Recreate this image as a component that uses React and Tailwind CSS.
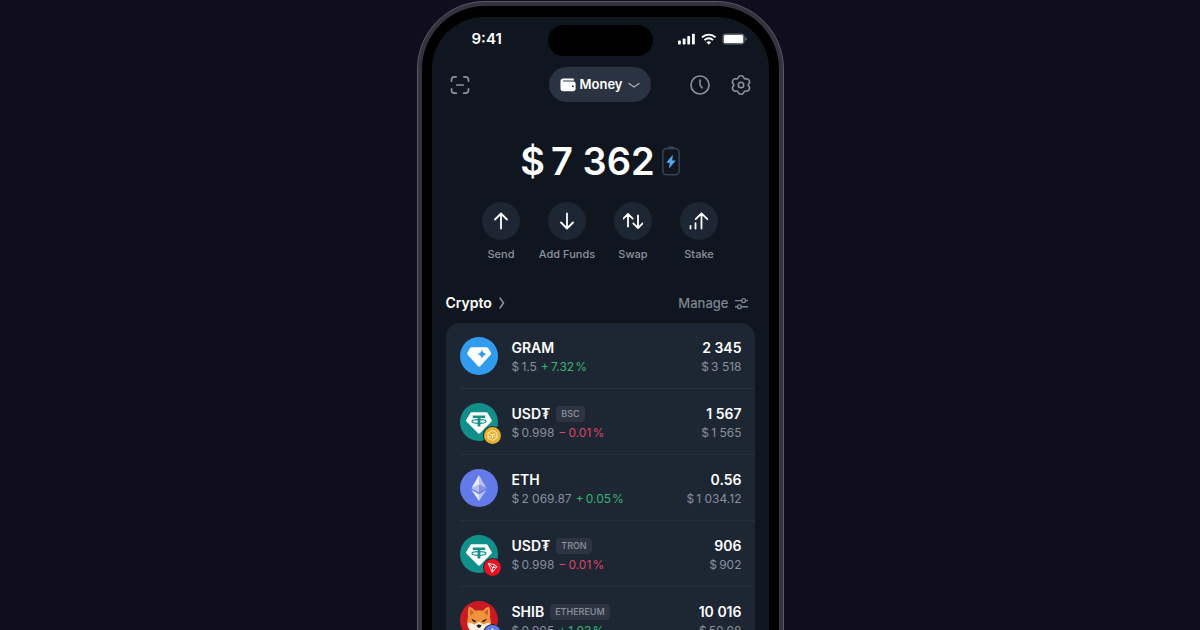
import clsx from "clsx";

/* ---------------- DATA ---------------- */
const ACTIONS = [
  { label: "Send", icon: "send" },
  { label: "Add Funds", icon: "add" },
  { label: "Swap", icon: "swap" },
  { label: "Stake", icon: "stake" },
];

const TOKENS = [
  { id: "gram", icon: "gram", name: "GRAM", price: "$ 1.5", change: "+ 7.32 %", up: true, amount: "2 345", value: "$ 3 518" },
  { id: "usdt-bsc", icon: "usdt", badge: "bsc", name: "USD₮", network: "BSC", price: "$ 0.998", change: "− 0.01 %", up: false, amount: "1 567", value: "$ 1 565" },
  { id: "eth", icon: "eth", name: "ETH", price: "$ 2 069.87", change: "+ 0.05 %", up: true, amount: "0.56", value: "$ 1 034.12" },
  { id: "usdt-tron", icon: "usdt", badge: "tron", name: "USD₮", network: "TRON", price: "$ 0.998", change: "− 0.01 %", up: false, amount: "906", value: "$ 902" },
  { id: "shib", icon: "shib", badge: "eth", name: "SHIB", network: "ETHEREUM", price: "$ 0.005", change: "+ 1.03 %", up: true, amount: "10 016", value: "$ 50.08" },
];

// currency signs and percents are set off with a thin space
const thin = (s) => s.replace(/([$+−]) /g, "$1\u2009").replace(/ %/g, "\u200A%");

/* ---------------- ICONS ---------------- */
const Stroke = ({ className, children, width = 1.5, box = 20 }) => (
  <svg
    viewBox={`0 0 ${box} ${box}`}
    className={className}
    fill="none"
    stroke="currentColor"
    strokeWidth={width}
    strokeLinecap="round"
    strokeLinejoin="round"
    aria-hidden="true"
  >
    {children}
  </svg>
);

const ScanIcon = () => (
  <Stroke className="size-5" width={1.7}>
    <path d="M1.5 6.2V5a3.2 3.2 0 0 1 3.2-3.2h1.5M13.8 1.8h1.5A3.2 3.2 0 0 1 18.5 5v1.2M18.5 13.8V15a3.2 3.2 0 0 1-3.2 3.2h-1.5M6.2 18.2H4.7A3.2 3.2 0 0 1 1.5 15v-1.2M6.8 10h6.4" />
  </Stroke>
);

const ClockIcon = () => (
  <Stroke className="size-5" width={1.6}>
    <circle cx="10" cy="10" r="9" />
    <path d="M10 5v4.6c0 .5.2.8.5 1.2l1.6 2" />
  </Stroke>
);

const GearIcon = () => (
  <Stroke className="size-5" width={1.6}>
    <path d="M10 .8Q12.16.8 12.73 2.47 13.2 4.3 15.16 3.87 17.02 3.45 18.1 5.32 19.18 7.19 17.89 8.6 16.6 10 17.89 11.4 19.18 12.81 18.1 14.68 17.02 16.55 15.16 16.13 13.2 15.7 12.73 17.53 12.16 19.2 10 19.2 7.84 19.2 7.27 17.53 6.8 15.7 4.84 16.13 2.98 16.55 1.9 14.68.82 12.81 2.11 11.4 3.4 10 2.11 8.6.82 7.19 1.9 5.32 2.98 3.45 4.84 3.87 6.8 4.3 7.27 2.47 7.84.8 10 .8Z" />
    <circle cx="10" cy="10" r="2.7" />
  </Stroke>
);

const WalletIcon = () => (
  <svg viewBox="0 0 16 14" className="h-3.5 w-4" aria-hidden="true">
    <path fill="#fff" d="M3.2.6h9.300c1 0 1.600.6 1.700 1.500l-.1.5H3a.5.5 0 0 0 0 .9h10.200c1.600 0 2.400.9 2.400 2.300v5c0 1.600-.9 2.500-2.500 2.500H3.200C1.500 13.300.5 12.300.5 10.600V3.300C.5 1.600 1.500.6 3.2.6Z" />
    <circle cx="12.8" cy="8.2" r="1" fill="#2a3342" />
  </svg>
);

const ACTION_PATHS = {
  send: "M10 17.5V2.5M4 8.5l6-6 6 6",
  add: "M10 2.5v15M4 11.5l6 6 6-6",
  swap: "M5 15.5V3M.3 7.7 5 3l4.700 4.700M15 4.500V17M10.300 12.300 15 17l4.700-4.700",
  stake: "M1.5 17.5v-2.6M6.5 17.5v-5.3M12.5 17.5v-15M6.7 8.1l5.8-5.8 5.8 5.8",
};

const ActionIcon = ({ name }) => (
  <Stroke className="size-5" width={1.8}>
    <path d={ACTION_PATHS[name]} />
  </Stroke>
);

const StatusIcons = () => (
  <svg viewBox="0 0 70 14" className="h-3.5 w-[70px]" fill="#fff" aria-hidden="true">
    <rect x="1" y="8.5" width="2.8" height="4" rx=".8" />
    <rect x="5.7" y="6.5" width="2.8" height="6" rx=".8" />
    <rect x="10.3" y="4" width="2.8" height="8.5" rx=".8" />
    <rect x="15" y="1.8" width="2.8" height="10.7" rx=".8" />
    <g fill="none" stroke="#fff" strokeWidth="1.9">
      <path d="M25 5.4a9.7 9.7 0 0 1 13.6 0" />
      <path d="M27.5 8.1a6 6 0 0 1 8.600 0" />
    </g>
    <path d="M29.5 10.2a3.4 3.4 0 0 1 4.6 0l-2.3 2.5Z" />
    <rect x="45.5" y="1.5" width="22" height="11" rx="3" fill="#9a9da3" fillOpacity=".6" />
    <rect x="47" y="3" width="19" height="8" rx="1.5" />
    <path d="M68.4 5.3v3.4c.7-.3 1.2-1 1.2-1.7s-.5-1.4-1.2-1.7Z" fillOpacity=".5" />
  </svg>
);

const BatteryIcon = () => (
  <svg viewBox="0 0 18 30" className="h-[30px] w-[18px]" aria-hidden="true">
    <path d="M6 1.5Q6 .5 7 .5h4q1 0 1 1V2H6Z" fill="#3a4350" />
    <rect x=".9" y="2.4" width="16.2" height="26.4" rx="3.8" fill="none" stroke="#3a4350" strokeWidth="1.5" />
    <path d="M10.5 9.6 4.7 16.4h3.5L7.4 21.7l5.9-6.9H9.800Z" fill="#55a9ee" stroke="#55a9ee" strokeWidth=".6" strokeLinejoin="round" />
  </svg>
);

/* ---------------- TOKEN LOGOS ---------------- */
const LOGOS = {
  gram: (
    <>
      <circle cx="19" cy="19" r="19" fill="#319bee" />
      <path d="M11.7 10.2h14.6q1.2 0 1.900 1l2.600 4q.9 1.400-.2 2.600L20.400 28.900q-1.200 1.300-2.500 0L7.800 18.100q-1.200-1.300-.2-2.700l2.300-4.200q.6-1 1.800-1Z" fill="#fff" />
      <path d="M22 12.3q.7 4.2 4.7 4.9-4 .7-4.700 4.900-.7-4.200-4.700-4.900 4-.7 4.700-4.900Z" fill="#319bee" />
    </>
  ),
  usdt: (
    <>
      <circle cx="19" cy="19" r="19" fill="#11908b" />
      <path d="M11.6 9.3h14.800q.8 0 1.200.7l4.100 7q.5.9-.2 1.600L19.900 30.200q-.9.9-1.800 0L6.400 18.600q-.7-.7-.2-1.600l4.200-7q.4-.7 1.200-.7Z" fill="#fff" />
      <path d="M12.8 12.5h12.4v2.600h-4.800v8.400h-2.800v-8.400h-4.800Z" fill="#11908b" />
      <ellipse cx="19" cy="18.5" rx="7" ry="1.8" fill="none" stroke="#11908b" strokeWidth="1.2" />
    </>
  ),
  eth: (
    <>
      <circle cx="19" cy="19" r="19" fill="#627be8" />
      <path d="M19 6v9.7l-7.6 3.5Z" fill="#e9edff" />
      <path d="m19 6 7.6 13.2-7.6-3.5Z" fill="#b6c1f4" />
      <path d="M19 15.7v8l-7.6-4.5Z" fill="#b6c1f4" />
      <path d="m19 15.7 7.6 3.5-7.6 4.5Z" fill="#8795dc" />
      <path d="M19 25.3V32l-7.6-11.2Z" fill="#e9edff" />
      <path d="m19 25.3 7.6-4.5L19 32Z" fill="#b6c1f4" />
    </>
  ),
  shib: (
    <>
      <circle cx="19" cy="19" r="19" fill="#c91a24" />
      <path d="M9 5.5q3.4 1 6.2 4.3 3.8-1 7.6 0Q25.6 6.5 29 5.5q1.8 5 .8 10.5 1.7 3.5.7 8-2.5 7.5-11.5 9.5Q10 31.5 7.5 24q-1-4.5.7-8-1-5.5.8-10.5Z" fill="#f3933c" />
      <path d="M10.3 8.2q2.2 1.2 3.7 3.3l-3.6 3.3Q9.6 11 10.3 8.2ZM27.7 8.2q-2.2 1.2-3.700 3.3l3.600 3.300q.8-3.800.1-6.600Z" fill="#c9622c" />
      <path d="M8 22q3.5-.8 6 1.8l5-3 5 3q2.5-2.6 6-1.8 1 2.5-.5 5-2.7 4.5-10.5 6.5-7.8-2-10.5-6.5Q7 24.5 8 22Z" fill="#fff0df" />
      <path d="m11.2 17.5 5 2.6-1.2 1.3q-2.8-.7-3.8-3.9ZM26.8 17.5l-5 2.6 1.2 1.3q2.8-.7 3.8-3.9Z" fill="#32201c" />
      <path d="M16.500 24q2.500-1 5 0-.4 2.400-2.500 2.900-2.100-.5-2.500-2.900ZM15 28.800q4 1.800 8 0-1.500 2.700-4 2.700t-4-2.700Z" fill="#1d1718" />
    </>
  ),
};

const BADGES = {
  bsc: (
    <>
      <circle cx="9" cy="9" r="9" fill="#e5b12e" />
      <path d="m9 3.6 4.7 2.7v5.4L9 14.4l-4.7-2.7V6.3Z" fill="none" stroke="#fff2c9" strokeWidth="1" />
      <path d="M6.2 7.2 9 8.8l2.8-1.6M9 8.8v3.4M6.5 9.5v1.3M11.5 9.5v1.3" fill="none" stroke="#fff2c9" strokeWidth="1.2" />
    </>
  ),
  tron: (
    <>
      <circle cx="9" cy="9" r="9" fill="#ed1020" />
      <path d="m4.6 4.7 6.6 1.2 2.5 2.3-5.1 5.9ZM4.6 4.7l4.6 4.5 2-3.3M9.2 9.2l4.5-1M9.2 9.2l-.6 4.9" fill="none" stroke="#fff" strokeWidth=".9" strokeLinejoin="round" />
    </>
  ),
  eth: (
    <>
      <circle cx="9" cy="9" r="9" fill="#627be8" />
      <path d="M9 2.8 5.4 9 9 11.1 12.6 9Z" fill="#dfe5ff" />
      <path d="m9 12.3-3.6-2.1L9 15.2l3.6-5Z" fill="#dfe5ff" />
    </>
  ),
};

const TokenLogo = ({ icon, badge }) => (
  <div className="relative size-[38px] shrink-0">
    <svg viewBox="0 0 38 38" className="size-full" aria-hidden="true">
      {LOGOS[icon]}
    </svg>
    {badge && (
      <span className="absolute -right-1 -bottom-1 rounded-full bg-[#1d2633] p-px">
        <svg viewBox="0 0 18 18" className="size-[17px]" aria-hidden="true">
          {BADGES[badge]}
        </svg>
      </span>
    )}
  </div>
);

/* ---------------- ROW ---------------- */
const TokenRow = ({ token, first }) => (
  <li className="pl-3.5">
    <div
      className={clsx(
        "flex items-center gap-3.5 border-[#26303d] pt-3.5 pr-[13px] pb-[13px]",
        !first && "border-t"
      )}
    >
      <TokenLogo icon={token.icon} badge={token.badge} />
      <div className="flex-1">
        <div className="flex h-5 items-center gap-1.5">
          <span className="text-sm leading-5 font-semibold text-white">{token.name}</span>
          {token.network && (
            <span className="rounded bg-[#2c3541] px-[5px] text-[9px] leading-4 font-medium text-[#8a929e]">
              {token.network}
            </span>
          )}
        </div>
        <div className="flex gap-1 text-xs leading-[17px]">
          <span className="text-[#87909c]">{thin(token.price)}</span>
          <span className={token.up ? "text-[#37b574]" : "text-[#df4568]"}>{thin(token.change)}</span>
        </div>
      </div>
      <div className="text-right">
        <div className="text-sm leading-5 font-semibold text-white">{token.amount}</div>
        <div className="text-xs leading-[17px] text-[#87909c]">{thin(token.value)}</div>
      </div>
    </div>
  </li>
);

/* ---------------- MAIN ---------------- */
export default function App() {
  return (
    <main className="flex h-screen justify-center overflow-hidden bg-[#100e1e] pt-px font-['Inter',sans-serif]">
      <div className="h-[780px] w-full max-w-[367px] shrink-0 rounded-[68px] border border-[#5a5866] bg-[#34323f] p-1">
        <div className="h-full rounded-[63px] bg-black px-2.5 py-[11px]">
          <div className="h-full overflow-hidden rounded-[52px] bg-[#10161f] px-3.5">
            {/* STATUS BAR */}
            <div className="grid grid-cols-[1fr_auto_1fr] items-center pt-2">
              <span className="pb-1 pl-[26px] text-[15px] leading-5 font-semibold text-white">9:41</span>
              <div className="h-[31px] w-[105px] rounded-full bg-black" />
              <div className="flex justify-end pr-2 pb-1">
                <StatusIcons />
              </div>
            </div>

            {/* TOP BAR */}
            <header className="grid grid-cols-[1fr_auto_1fr] items-center px-1 pt-[11px] text-[#8b929d]">
              <button aria-label="Scan QR code" className="justify-self-start">
                <ScanIcon />
              </button>
              <button className="flex h-[35px] items-center gap-1 rounded-full bg-[#2a3342] px-[11px] text-[13px] font-semibold text-white">
                <WalletIcon />
                Money
                <Stroke className="ml-0.5 size-3 text-[#a2a8b1]" box={12}>
                  <path d="M1 4.5 6 8l5-3.5" />
                </Stroke>
              </button>
              <div className="flex justify-end gap-[21px]">
                <button aria-label="History">
                  <ClockIcon />
                </button>
                <button aria-label="Settings">
                  <GearIcon />
                </button>
              </div>
            </header>

            {/* BALANCE */}
            <div className="mt-[35px] flex h-12 items-center justify-center gap-[7px]">
              <h1 className="flex gap-1.5 text-[38px] leading-[48px] font-semibold text-white">
                <span>$</span>
                <span>7 362</span>
              </h1>
              <BatteryIcon />
            </div>

            {/* ACTIONS */}
            <div className="mt-[17px] flex justify-center">
              {ACTIONS.map((a) => (
                <button key={a.icon} className="flex w-[66px] flex-col items-center gap-1.5">
                  <span className="flex size-[38px] items-center justify-center rounded-full bg-[#1d2633] text-white">
                    <ActionIcon name={a.icon} />
                  </span>
                  <span className="text-[11px] leading-4 font-medium whitespace-nowrap text-[#8b929d]">
                    {a.label}
                  </span>
                </button>
              ))}
            </div>

            {/* CRYPTO */}
            <section className="mt-[31px]">
              <div className="flex items-center justify-between pr-[7px]">
                <h2>
                  <a href="#crypto" className="flex items-center gap-1 text-sm leading-5 font-semibold text-white">
                    Crypto
                    <Stroke className="size-3 text-[#8b929d]" box={12}>
                      <path d="M4 1q3.5 5 3.5 5T4 11" />
                    </Stroke>
                  </a>
                </h2>
                <button className="flex items-center gap-1.5 text-[13px] leading-5 font-medium text-[#7d8590]">
                  Manage
                  <Stroke className="size-[13px]" width={1.2} box={12}>
                    <path d="M.5 3.3H6M9.8 3.3h1.7M.5 9h1.700M6 9h5.500" />
                    <circle cx="7.9" cy="3.3" r="1.8" />
                    <circle cx="4.1" cy="9" r="1.8" />
                  </Stroke>
                </button>
              </div>

              <ul className="mt-2.5 rounded-[14px] bg-[#1d2633]">
                {TOKENS.map((t, i) => (
                  <TokenRow key={t.id} token={t} first={i === 0} />
                ))}
              </ul>
            </section>
          </div>
        </div>
      </div>
    </main>
  );
}
